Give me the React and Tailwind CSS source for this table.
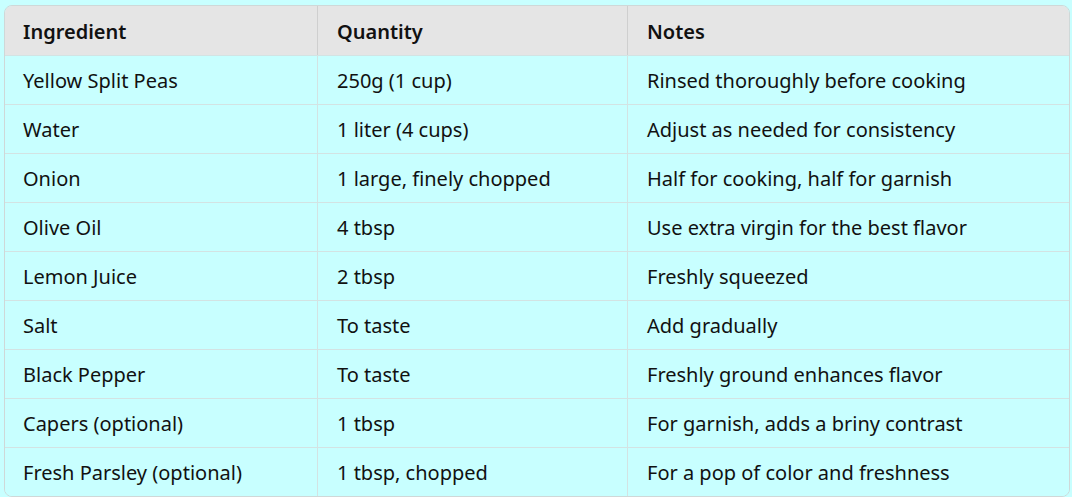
export default function App() {
  const rows = [
    ["Yellow Split Peas", "250g (1 cup)", "Rinsed thoroughly before cooking"],
    ["Water", "1 liter (4 cups)", "Adjust as needed for consistency"],
    ["Onion", "1 large, finely chopped", "Half for cooking, half for garnish"],
    ["Olive Oil", "4 tbsp", "Use extra virgin for the best flavor"],
    ["Lemon Juice", "2 tbsp", "Freshly squeezed"],
    ["Salt", "To taste", "Add gradually"],
    ["Black Pepper", "To taste", "Freshly ground enhances flavor"],
    ["Capers (optional)", "1 tbsp", "For garnish, adds a briny contrast"],
    ["Fresh Parsley (optional)", "1 tbsp, chopped", "For a pop of color and freshness"],
  ];
  return (
    <div className="w-[1072px] h-[497px] bg-[#c8ffff] pt-[5px] pl-[4px] overflow-hidden" style={{ fontFamily: '"Noto Sans", "Open Sans", sans-serif' }}>
      <div className="w-[1066px] border border-[#cfd8d8] rounded-[8px] overflow-hidden text-[20px] text-[#111]">
        <div className="grid grid-cols-[313px_310px_1fr] h-[49px] bg-[#e5e5e5] font-semibold">
          <div className="flex items-center pt-[2px] pl-[18px] border-r border-[#cfcfcf]">Ingredient</div>
          <div className="flex items-center pt-[2px] pl-[19px] border-r border-[#cfcfcf]">Quantity</div>
          <div className="flex items-center pt-[2px] pl-[19px]">Notes</div>
        </div>
        {rows.map((r, i) => (
          <div key={i} className="grid grid-cols-[313px_310px_1fr] h-[49px] border-t border-[#d3e3e3] bg-[#c8ffff]">
            <div className="flex items-center pt-[2px] pl-[18px] border-r border-[#d3e3e3]">{r[0]}</div>
            <div className="flex items-center pt-[2px] pl-[19px] border-r border-[#d3e3e3]">{r[1]}</div>
            <div className="flex items-center pt-[2px] pl-[19px]">{r[2]}</div>
          </div>
        ))}
      </div>
    </div>
  );
}
